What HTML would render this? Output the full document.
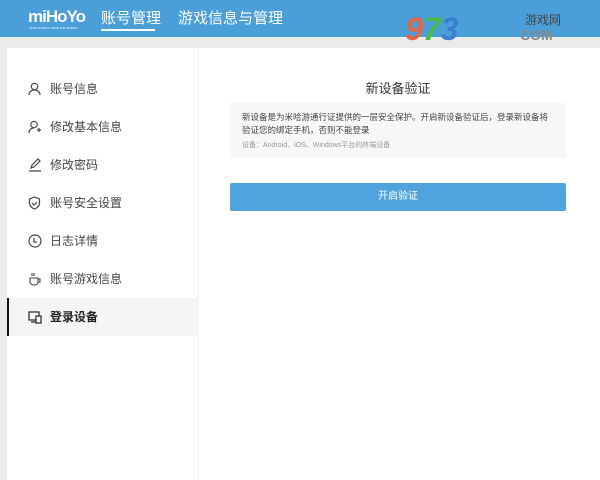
<!DOCTYPE html>
<html><head><meta charset="utf-8"><style>
*{margin:0;padding:0;box-sizing:border-box}
body{width:600px;height:480px;overflow:hidden;background:#ebebeb;font-family:"Liberation Sans","Noto Sans CJK SC",sans-serif;position:relative}
.hdr{position:absolute;left:0;top:0;width:600px;height:37px;background:#4b9fd9;color:#fff}
.logo{position:absolute;left:28px;top:7px;font-size:17px;font-weight:bold;letter-spacing:-1px}
.logo small{position:absolute;left:1px;top:19px;font-size:3px;letter-spacing:0;white-space:nowrap;font-weight:normal}
.nav{position:absolute;top:7px;font-size:15px}
.ul{position:absolute;left:101px;top:29px;width:54px;height:2px;background:#fff}
.panel{position:absolute;left:7px;top:48px;width:593px;height:432px;background:#fff}
.side{position:absolute;left:0;top:0;width:192px;height:432px;border-right:1px solid #eee}
.it{position:absolute;left:0;width:192px;height:38px;font-size:12px;color:#444;line-height:38px;padding-left:43px}
.it svg{position:absolute;left:21px;top:12px}
.act{background:#f5f5f5;border-left:2px solid #111;font-weight:bold;color:#222;padding-left:41px}
.act svg{left:19px}
.title{position:absolute;left:223px;width:336px;top:30px;text-align:center;font-size:13px;color:#333}
.box{position:absolute;left:223px;top:55px;width:336px;height:55px;background:#f7f7f7;padding:8px 12px;font-size:8.5px;line-height:13px;color:#444}
.box .s{color:#999;font-size:7px;line-height:12px;margin-top:3px}
.btn{position:absolute;left:223px;top:135px;width:336px;height:28px;background:#4fa4dd;border-radius:2px;color:#fff;font-size:10px;text-align:center;line-height:28px}
</style></head><body>
<div class="hdr">
<div class="logo">miHoYo<small>TECH OTAKUS SAVE THE WORLD</small></div>
<div class="nav" style="left:101px">账号管理</div>
<div class="ul"></div>
<div class="nav" style="left:178px">游戏信息与管理</div>
<div style="position:absolute;left:405px;top:12px;font-size:32px;font-weight:bold;color:#e8643c;font-style:italic;line-height:34px">9<span style="color:#4cb848">7</span><span style="color:#3a7fd0">3</span></div>
<div style="position:absolute;left:525px;top:11px;font-size:12px;color:#444">游戏网</div>
<div style="position:absolute;left:520px;top:27px;font-size:14px;font-weight:bold;color:#888">COM</div>
</div>
<div class="panel">
<div class="side">
<div class="it" style="top:22px"><svg width="13" height="14" viewBox="0 0 13 14" fill="none" stroke="#444" stroke-width="1.2"><circle cx="6.5" cy="4.5" r="3.2"/><path d="M1 13c0-3 2.5-5 5.5-5s5.5 2 5.5 5"/></svg>账号信息</div>
<div class="it" style="top:60px"><svg width="13" height="14" viewBox="0 0 13 14" fill="none" stroke="#444" stroke-width="1.2"><circle cx="6" cy="4.5" r="3.2"/><path d="M1 13c0-3 2-5 5-5M9 10h4M11 8v4"/></svg>修改基本信息</div>
<div class="it" style="top:98px"><svg width="14" height="14" viewBox="0 0 14 14" fill="none" stroke="#444" stroke-width="1.2"><path d="M3 10l1-3 6-6 2 2-6 6zM1 13h12"/></svg>修改密码</div>
<div class="it" style="top:136px"><svg width="13" height="14" viewBox="0 0 13 14" fill="none" stroke="#444" stroke-width="1.2"><path d="M6.5 1l5 2v4c0 3-2.5 5-5 6-2.5-1-5-3-5-6V3z"/><path d="M4 7l2 2 3-3"/></svg>账号安全设置</div>
<div class="it" style="top:174px"><svg width="14" height="14" viewBox="0 0 14 14" fill="none" stroke="#444" stroke-width="1.2"><circle cx="7" cy="7" r="6"/><path d="M6 4v4h3"/></svg>日志详情</div>
<div class="it" style="top:212px"><svg width="14" height="14" viewBox="0 0 14 14" fill="none" stroke="#444" stroke-width="1.1"><path d="M2 6h8v4c0 2-2 3-4 3s-4-1-4-3zM10 7h2v3h-2M4 1v3M6 1v3"/></svg>账号游戏信息</div>
<div class="it act" style="top:250px"><svg width="15" height="14" viewBox="0 0 15 14" fill="none" stroke="#333" stroke-width="1.3"><rect x="1" y="2" width="10" height="8"/><rect x="8" y="6" width="5" height="7" fill="#f5f5f5"/><path d="M3 12h5"/></svg>登录设备</div>
</div>
<div class="title">新设备验证</div>
<div class="box">新设备是为米哈游通行证提供的一层安全保护。开启新设备验证后，登录新设备将验证您的绑定手机，否则不能登录<div class="s">设备：Android、iOS、Windows平台的终端设备</div></div>
<div class="btn">开启验证</div>
</div>
</body></html>
